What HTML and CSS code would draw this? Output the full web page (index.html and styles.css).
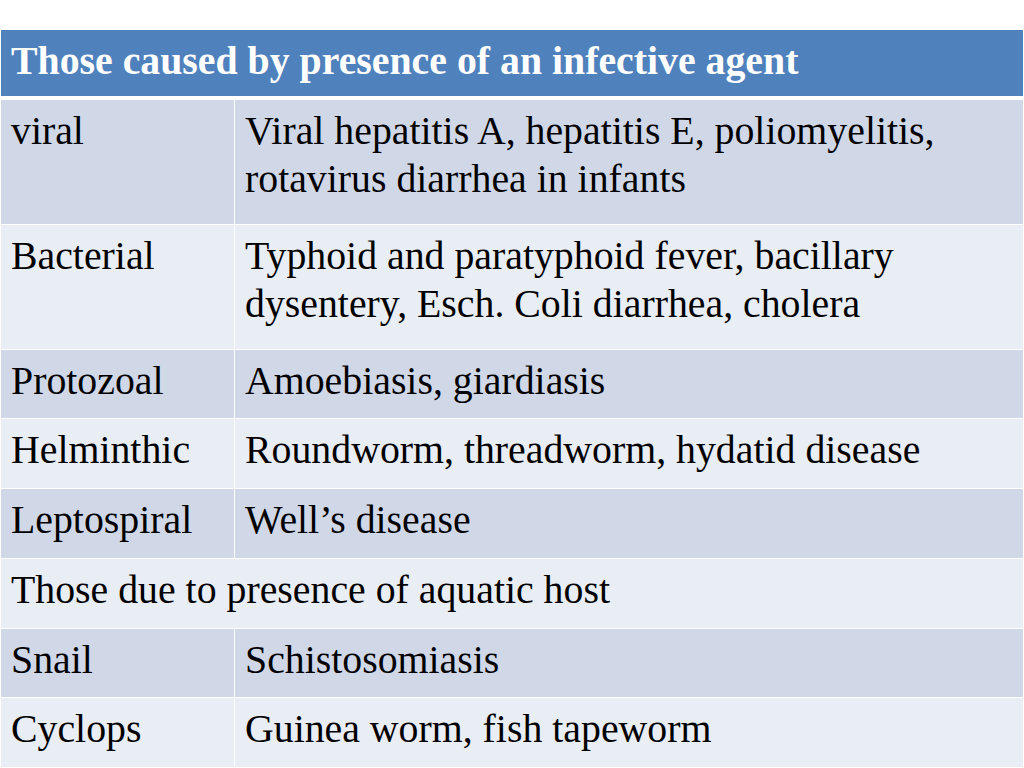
FILE: index.html
```html
<!DOCTYPE html>
<html lang="en">
<head>
<meta charset="utf-8">
<title>Water-related diseases</title>
<link rel="stylesheet" href="styles.css">
</head>
<body>
<div class="table">
  <div class="cell head span">Those caused by presence of an infective agent</div>

  <div class="cell dark">viral</div>
  <div class="cell dark">Viral hepatitis A, hepatitis E, poliomyelitis, rotavirus diarrhea in infants</div>

  <div class="cell light">Bacterial</div>
  <div class="cell light">Typhoid and paratyphoid fever, bacillary dysentery, Esch. Coli diarrhea, cholera</div>

  <div class="cell dark">Protozoal</div>
  <div class="cell dark">Amoebiasis, giardiasis</div>

  <div class="cell light">Helminthic</div>
  <div class="cell light">Roundworm, threadworm, hydatid disease</div>

  <div class="cell dark">Leptospiral</div>
  <div class="cell dark">Well’s disease</div>

  <div class="cell light span">Those due to presence of aquatic host</div>

  <div class="cell dark">Snail</div>
  <div class="cell dark">Schistosomiasis</div>

  <div class="cell light">Cyclops</div>
  <div class="cell light">Guinea worm, fish tapeworm</div>
</div>
</body>
</html>
```

FILE: styles.css
```css
html, body {
  margin: 0;
  padding: 0;
  background: #ffffff;
}

body {
  width: 1024px;
  height: 768px;
  overflow: hidden;
  font-family: "Liberation Serif", "Times New Roman", serif;
  font-size: 39.8px;
  line-height: 48px;
  color: #000000;
}

.table {
  margin: 30px 0 0 1px;
  width: 1022px;
  display: grid;
  grid-template-columns: 233px 788px;
  grid-template-rows: 69px 124px 124px 68px 69px 69px 69px 68px 69px;
  gap: 1px;
  background: #ffffff;
}

.cell {
  padding: 7px 10px 0 10px;
  box-sizing: border-box;
}

.span {
  grid-column: 1 / 3;
}

.head {
  background: #4f81bd;
  color: #ffffff;
  font-weight: bold;
  border-bottom: 3px solid #ffffff;
}

.dark {
  background: #d0d8e8;
}

.light {
  background: #e9edf4;
}
```
